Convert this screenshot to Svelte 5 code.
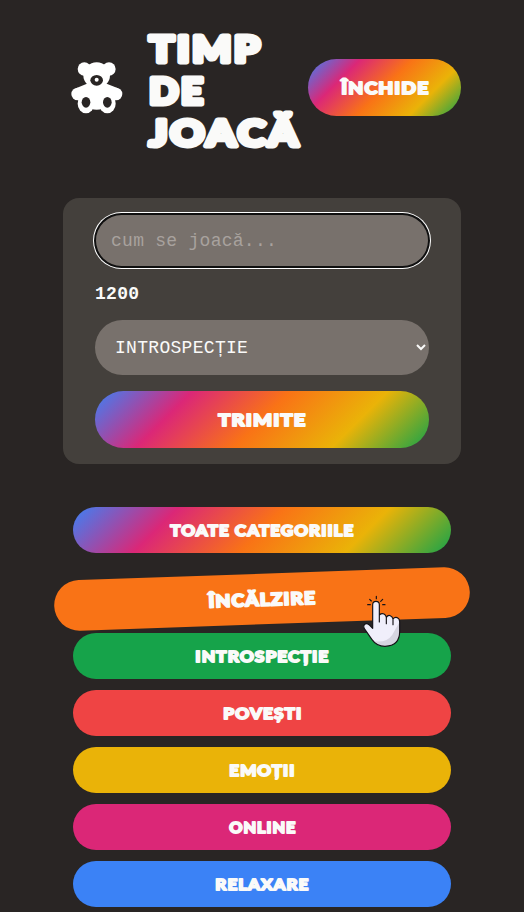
<script>
  let play = $state('');
  let category = $state('INTROSPECȚIE');

  const categories = [
    { name: 'TOATE CATEGORIILE', tone: 'rainbow', width: 184 },
    { name: 'ÎNCĂLZIRE', tone: 'orange', width: 98 },
    { name: 'INTROSPECȚIE', tone: 'green', width: 134 },
    { name: 'POVEȘTI', tone: 'red', width: 79 },
    { name: 'EMOȚII', tone: 'yellow', width: 66 },
    { name: 'ONLINE', tone: 'pink', width: 67 },
    { name: 'RELAXARE', tone: 'blue', width: 94 }
  ];
</script>

{#snippet lettering(text, width, cap, weight)}
  <svg class="lettering" {width} height={cap} aria-label={text}>
    <text
      x={weight / 2 - cap * 0.04}
      y={cap - weight / 2}
      font-size={(cap - weight) / 0.72}
      stroke-width={weight}
      letter-spacing={weight * 0.5}
      textLength={width - weight * 0.6 + cap * 0.08}
      lengthAdjust="spacingAndGlyphs">{text}</text>
  </svg>
{/snippet}

<main>
  <header>
    <svg class="bear" width="52" height="52" viewBox="0 0 156 156">
      <g fill="#fff">
        <circle cx="40" cy="21" r="20" />
        <circle cx="114" cy="21" r="20" />
        <ellipse cx="77" cy="40" rx="40" ry="39" />
        <ellipse cx="77" cy="105" rx="45" ry="38" />
        <circle cx="20" cy="96" r="19" />
        <circle cx="135" cy="96" r="19" />
        <path d="M15 79L46 66H109L141 79L126 114H29Z" />
        <ellipse cx="45" cy="125" rx="25" ry="29" />
        <ellipse cx="109" cy="125" rx="25" ry="29" />
      </g>
      <g fill="#292524">
        <ellipse cx="77" cy="55" rx="19" ry="16" />
        <ellipse cx="45" cy="121" rx="13" ry="16" />
        <ellipse cx="109" cy="121" rx="13" ry="16" />
      </g>
      <circle cx="77" cy="53" r="6" fill="#fff" />
    </svg>
    <h1>
      {@render lettering('TIMP', 114, 31, 5)}
      {@render lettering('DE', 57, 31, 5)}
      {@render lettering('JOACĂ', 152, 31, 5)}
    </h1>
    <button class="close rainbow">{@render lettering('ÎNCHIDE', 88, 14.5, 1.9)}</button>
  </header>

  <form onsubmit={(e) => e.preventDefault()}>
    <input bind:value={play} placeholder="cum se joacă..." />
    <p>1200</p>
    <select bind:value={category}>
      {#each categories.slice(1) as item}
        <option>{item.name}</option>
      {/each}
    </select>
    <button class="send rainbow">{@render lettering('TRIMITE', 88, 14.5, 1.9)}</button>
  </form>

  <nav>
    {#each categories as item}
      <button class="category {item.tone}">{@render lettering(item.name, item.width, 13, 1.8)}</button>
    {/each}
  </nav>

  <svg class="pointer" width="44" height="54" viewBox="270 100 132 162">
    <g fill="none" stroke="#151318" stroke-width="3.5" stroke-linecap="round">
      <path d="M319 110V117M299 119L304 124M338 119L332 125M293 135H301M338 135H345" />
    </g>
    <path
      d="M308 206V135Q308 125 318 125Q328 125 328 135V166Q335 160 342 163Q348 166 349 173Q354 165 361 168Q368 171 369 178Q374 171 382 174Q389 177 389 186V215Q389 259 345 260Q320 260 306 240L283 207Q279 200 283 195Q289 189 297 195Z"
      fill="#f0effb" />
    <path d="M387 190V215Q387 258 345 258Q327 258 314 245Q350 250 367 225Q375 211 387 190Z" fill="#d6d5e1" />
    <path
      d="M308 206V135Q308 125 318 125Q328 125 328 135V166Q335 160 342 163Q348 166 349 173Q354 165 361 168Q368 171 369 178Q374 171 382 174Q389 177 389 186V215Q389 259 345 260Q320 260 306 240L283 207Q279 200 283 195Q289 189 297 195L308 206M328 166V187M349 173V192M369 178V195"
      fill="none"
      stroke="#151318"
      stroke-width="3.5"
      stroke-linecap="round"
      stroke-linejoin="round" />
  </svg>
</main>

<style>
  :global(body) {
    background: #292524;
  }
  main {
    position: relative;
    box-sizing: border-box;
    height: 912px;
    overflow: hidden;
    padding: 27px 63px 0;
    background: #292524;
    font-family: 'Liberation Mono', monospace;
    color: #fafaf9;
  }
  header {
    display: flex;
    align-items: center;
    height: 121px;
    padding-left: 8px;
  }
  .bear {
    flex: none;
    margin-top: 1px;
  }
  h1 {
    display: flex;
    flex-direction: column;
    gap: 11px;
    width: 160px;
    margin: 5px 0 0 25px;
  }
  .lettering {
    display: block;
    overflow: visible;
  }
  .lettering text {
    font-family: Lato, sans-serif;
    font-weight: 900;
    fill: #fafaf9;
    stroke: #fafaf9;
    stroke-linejoin: round;
  }
  button {
    display: flex;
    align-items: center;
    justify-content: center;
    padding: 0;
    border: 0;
    border-radius: 30px;
  }
  .close {
    flex: none;
    width: 153px;
    height: 57px;
  }
  form {
    display: flex;
    flex-direction: column;
    box-sizing: border-box;
    height: 266px;
    margin-top: 50px;
    padding: 17px 32px 16px;
    border-radius: 16px;
    background: #44403c;
  }
  input {
    box-sizing: border-box;
    height: 51px;
    margin: 0 1px;
    padding: 0 15px;
    border: 0;
    border-radius: 26px;
    outline: 0;
    box-shadow: 0 0 0 2px #101010, 0 0 0 3px #fff;
    background: #78716c;
    color: #fafaf9;
    font: 18px 'Liberation Mono', monospace;
    letter-spacing: 0.27px;
  }
  input::placeholder {
    color: #a8a29e;
  }
  p {
    margin: 16px 0 14px;
    font-size: 18px;
    font-weight: 700;
    line-height: 24px;
    letter-spacing: 0.3px;
  }
  select {
    height: 55px;
    padding: 0 16px;
    border: 0;
    border-radius: 28px;
    background: #78716c;
    color: #fafaf9;
    font: 18px 'Liberation Mono', monospace;
    letter-spacing: 0.3px;
  }
  .send {
    height: 57px;
    margin-top: 16px;
  }
  nav {
    display: flex;
    flex-direction: column;
    gap: 11px;
    margin: 43px 10px 0;
  }
  .category {
    flex: none;
    height: 46px;
    border-radius: 23px;
  }
  .rainbow {
    background: linear-gradient(135deg, #3b82f6, #db2777, #f97316, #eab308, #16a34a);
  }
  .orange {
    margin-top: 12px;
    background: #f97316;
    transform: rotate(-2deg) scale(1.1);
  }
  .green {
    background: #16a34a;
  }
  .red {
    background: #ef4444;
  }
  .yellow {
    background: #eab308;
  }
  .pink {
    background: #db2777;
  }
  .blue {
    background: #3b82f6;
  }
  .pointer {
    position: absolute;
    left: 359.5px;
    top: 593px;
  }
</style>
